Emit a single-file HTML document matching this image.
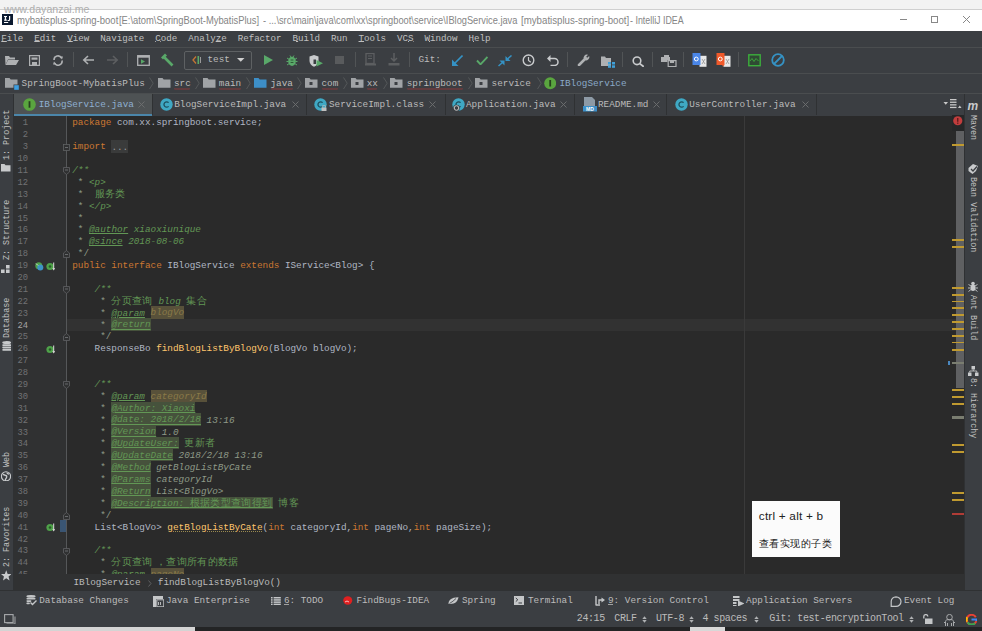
<!DOCTYPE html><html><head><meta charset="utf-8"><style>
*{margin:0;padding:0;box-sizing:border-box}
html,body{width:982px;height:631px;overflow:hidden;background:#3b3e42}
body{position:relative;font-family:"Liberation Mono",monospace;}
.a{position:absolute}
.t{position:absolute;white-space:pre;font-family:"Liberation Mono",monospace;}
.ui{color:#bbbbbb;font-size:9.17px;line-height:12px}
.code{position:absolute;white-space:pre;font-size:9.33px;line-height:11.89px;color:#b0b7c4;left:72.20px}
.k{color:#cc7832}
.m{color:#ffc66d}
.d{color:#629755;font-style:italic}
.st{color:#8f9a88}
.tag{color:#629755;font-style:italic;text-decoration:underline;text-decoration-thickness:1px;text-underline-offset:1px}
.tv{color:#8f9a88;font-style:italic}
.hw{background:#58513a;padding-top:1.2px}
.hg{background:#46523c;padding-top:1.2px}
.cj{font-family:"Liberation Sans",sans-serif;font-style:normal;font-size:10.1px;letter-spacing:0.35px;line-height:0}
.ln{position:absolute;white-space:pre;font-size:8.8px;line-height:11.89px;color:#707274;text-align:right;width:20px;left:8px}
.u{text-decoration:underline dotted #9a8a50;text-underline-offset:1px}
</style></head><body>
<div class="a" style="left:0;top:0;width:982px;height:9px;background:#f2f2f2"></div>
<div class="a" style="left:0;top:9px;width:982px;height:1px;background:#cfcfcf"></div>
<div class="a" style="left:0;top:10px;width:982px;height:21px;background:#ffffff"></div>
<div class="t" style="left:4px;top:3px;font-family:'Liberation Sans',sans-serif;font-size:10.6px;line-height:12px;color:#adadad">www.dayanzai.me</div>
<div class="a" style="left:2px;top:14px;width:11px;height:11px;background:#0c1a30"></div>
<svg class="a" style="left:2px;top:14px" width="11" height="11"><rect x="2" y="2" width="3" height="1" fill="#fff"/><rect x="2.8" y="2" width="1.3" height="4.5" fill="#fff"/><rect x="2" y="5.6" width="3" height="1" fill="#fff"/><path d="M7.6 2v3.6c0 0.6-0.4 0.9-1 0.9H5.6" fill="none" stroke="#fff" stroke-width="1.2"/><rect x="2" y="8" width="4.2" height="1" fill="#fff"/></svg>
<div class="t" style="left:16.5px;top:13.5px;font-family:'Liberation Sans',sans-serif;font-size:11px;line-height:13px;color:#858585;transform-origin:0 0;transform:scaleX(0.8676)">mybatisplus-spring-boot</div>
<div class="t" style="left:119.2px;top:13.5px;font-family:'Liberation Sans',sans-serif;font-size:11px;line-height:13px;color:#858585;transform-origin:0 0;transform:scaleX(0.8512)">[E:\atom\SpringBoot-MybatisPlus]</div>
<div class="t" style="left:263.4px;top:13.5px;font-family:'Liberation Sans',sans-serif;font-size:11px;line-height:13px;color:#858585;transform-origin:0 0;transform:scaleX(0.8424)">- ...\src\main\java\com\xx\springboot\service\IBlogService.java</div>
<div class="t" style="left:520.9px;top:13.5px;font-family:'Liberation Sans',sans-serif;font-size:11px;line-height:13px;color:#858585;transform-origin:0 0;transform:scaleX(0.8809)">[mybatisplus-spring-boot]</div>
<div class="t" style="left:630.4px;top:13.5px;font-family:'Liberation Sans',sans-serif;font-size:11px;line-height:13px;color:#858585;transform-origin:0 0;transform:scaleX(0.8058)">- IntelliJ IDEA</div>
<div class="a" style="left:900px;top:19px;width:7px;height:1px;background:#888"></div>
<div class="a" style="left:931px;top:16px;width:7px;height:7px;border:1px solid #888"></div>
<svg class="a" style="left:962px;top:15px" width="9" height="9"><path d="M1 1L8 8M8 1L1 8" stroke="#888" stroke-width="1"/></svg>
<div class="a" style="left:0;top:31px;width:982px;height:16px;background:#3b3e42"></div>
<div class="t ui" style="left:1.3px;top:32.5px;font-size:9.17px;line-height:12px;color:#c0c0c0"><span style="text-decoration:underline;text-underline-offset:0px">F</span>ile  <span style="text-decoration:underline;text-underline-offset:0px">E</span>dit  <span style="text-decoration:underline;text-underline-offset:0px">V</span>iew  <span style="text-decoration:underline;text-underline-offset:0px">N</span>avigate  <span style="text-decoration:underline;text-underline-offset:0px">C</span>ode  Analy<span style="text-decoration:underline;text-underline-offset:0px">z</span>e  <span style="text-decoration:underline;text-underline-offset:0px">R</span>efactor  <span style="text-decoration:underline;text-underline-offset:0px">B</span>uild  R<span style="text-decoration:underline;text-underline-offset:0px">u</span>n  <span style="text-decoration:underline;text-underline-offset:0px">T</span>ools  VC<span style="text-decoration:underline;text-underline-offset:0px">S</span>  <span style="text-decoration:underline;text-underline-offset:0px">W</span>indow  <span style="text-decoration:underline;text-underline-offset:0px">H</span>elp</div>
<div class="a" style="left:0;top:47px;width:982px;height:1px;background:#4a4d4f"></div>
<div class="a" style="left:0;top:73px;width:982px;height:1px;background:#4a4d4f"></div>
<div class="a" style="left:0;top:93px;width:982px;height:1px;background:#4a4d4f"></div>
<div class="a" style="left:13px;top:94px;width:1px;height:497px;background:#2f3133"></div>
<div class="a" style="left:964px;top:94px;width:1px;height:497px;background:#2f3133"></div>
<div class="a" style="left:14px;top:94px;width:138px;height:21px;background:#4e5254"></div>
<div class="a" style="left:14px;top:113.5px;width:138px;height:2.2px;background:#4b86aa"></div>
<div class="a" style="left:14px;top:116px;width:53px;height:458px;background:#303132"></div>
<div class="a" style="left:67px;top:116px;width:897px;height:458px;background:#2a2a2a"></div>
<div class="a" style="left:66px;top:116px;width:1px;height:458px;background:#555759"></div>
<div class="a" style="left:67px;top:319.03px;width:889px;height:11.59px;background:#323232"></div>
<div class="a" style="left:744px;top:116px;width:1px;height:458px;background:#3a3a3a"></div>
<div class="a" style="left:14px;top:574px;width:951px;height:16.5px;background:#303132"></div>
<div class="a" style="left:14px;top:116px;width:950px;height:458px;overflow:hidden">
<div class="ln" style="top:2.40px;left:-6px">1</div>
<div class="code" style="top:1.40px;left:58.20px"><span class="k">package</span> com.xx.springboot.service;</div>
<div class="ln" style="top:14.29px;left:-6px">2</div>
<div class="code" style="top:13.29px;left:58.20px"></div>
<div class="ln" style="top:26.18px;left:-6px">3</div>
<div class="code" style="top:25.18px;left:58.20px"><span class="k">import</span> <span style="background:#3a3b3b;color:#9a9a9a;padding:1.5px 0 1px">...</span></div>
<div class="ln" style="top:38.07px;left:-6px">10</div>
<div class="code" style="top:37.07px;left:58.20px"></div>
<div class="ln" style="top:49.96px;left:-6px">11</div>
<div class="code" style="top:48.96px;left:58.20px"><span class="d">/**</span></div>
<div class="ln" style="top:61.85px;left:-6px">12</div>
<div class="code" style="top:60.85px;left:58.20px"><span class="st"> * </span><span class="d">&lt;p&gt;</span></div>
<div class="ln" style="top:73.74px;left:-6px">13</div>
<div class="code" style="top:72.74px;left:58.20px"><span class="st"> *  </span><span class="d cj">服务类</span></div>
<div class="ln" style="top:85.63px;left:-6px">14</div>
<div class="code" style="top:84.63px;left:58.20px"><span class="st"> * </span><span class="d">&lt;/p&gt;</span></div>
<div class="ln" style="top:97.52px;left:-6px">15</div>
<div class="code" style="top:96.52px;left:58.20px"><span class="st"> *</span></div>
<div class="ln" style="top:109.41px;left:-6px">16</div>
<div class="code" style="top:108.41px;left:58.20px"><span class="st"> * </span><span class="tag">@author</span><span class="d"> xiaoxiunique</span></div>
<div class="ln" style="top:121.30px;left:-6px">17</div>
<div class="code" style="top:120.30px;left:58.20px"><span class="st"> * </span><span class="tag">@since</span><span class="d"> 2018-08-06</span></div>
<div class="ln" style="top:133.19px;left:-6px">18</div>
<div class="code" style="top:132.19px;left:58.20px"><span class="st"> */</span></div>
<div class="ln" style="top:145.08px;left:-6px">19</div>
<div class="code" style="top:144.08px;left:58.20px"><span class="k">public interface</span> IBlogService <span class="k">extends</span> IService&lt;Blog&gt; {</div>
<div class="ln" style="top:156.97px;left:-6px">20</div>
<div class="code" style="top:155.97px;left:58.20px"></div>
<div class="ln" style="top:168.86px;left:-6px">21</div>
<div class="code" style="top:167.86px;left:58.20px">    <span class="d">/**</span></div>
<div class="ln" style="top:180.75px;left:-6px">22</div>
<div class="code" style="top:179.75px;left:58.20px"><span class="st">     * </span><span class="d cj">分页查询</span><span class="d"> blog </span><span class="d cj">集合</span></div>
<div class="ln" style="top:192.64px;left:-6px">23</div>
<div class="code" style="top:191.64px;left:58.20px"><span class="st">     * </span><span class="tag">@param</span><span class="d"> </span><span class="tv hw" style="color:#8a7a48">blogVo</span></div>
<div class="ln" style="top:204.53px;left:-6px;color:#a4a3a3">24</div>
<div class="code" style="top:203.53px;left:58.20px"><span class="st">     * </span><span class="tag hg">@return</span></div>
<div class="ln" style="top:216.42px;left:-6px">25</div>
<div class="code" style="top:215.42px;left:58.20px"><span class="st">     */</span></div>
<div class="ln" style="top:228.31px;left:-6px">26</div>
<div class="code" style="top:227.31px;left:58.20px">    ResponseBo <span class="m">findBlogListByBlogVo</span>(BlogVo blogVo);</div>
<div class="ln" style="top:240.20px;left:-6px">27</div>
<div class="code" style="top:239.20px;left:58.20px"></div>
<div class="ln" style="top:252.09px;left:-6px">28</div>
<div class="code" style="top:251.09px;left:58.20px"></div>
<div class="ln" style="top:263.98px;left:-6px">29</div>
<div class="code" style="top:262.98px;left:58.20px">    <span class="d">/**</span></div>
<div class="ln" style="top:275.87px;left:-6px">30</div>
<div class="code" style="top:274.87px;left:58.20px"><span class="st">     * </span><span class="tag">@param</span><span class="d"> </span><span class="tv hw" style="color:#8a7a48">categoryId</span></div>
<div class="ln" style="top:287.76px;left:-6px">31</div>
<div class="code" style="top:286.76px;left:58.20px"><span class="st">     * </span><span class="tag hg">@Author: Xiaoxi</span></div>
<div class="ln" style="top:299.65px;left:-6px">32</div>
<div class="code" style="top:298.65px;left:58.20px"><span class="st">     * </span><span class="tag hg">@date: 2018/2/18</span><span class="tv"> 13:16</span></div>
<div class="ln" style="top:311.54px;left:-6px">33</div>
<div class="code" style="top:310.54px;left:58.20px"><span class="st">     * </span><span class="tag hg">@Version</span><span class="tv"> 1.0</span></div>
<div class="ln" style="top:323.43px;left:-6px">34</div>
<div class="code" style="top:322.43px;left:58.20px"><span class="st">     * </span><span class="tag hg">@UpdateUser:</span><span class="d"> </span><span class="d cj">更新者</span></div>
<div class="ln" style="top:335.32px;left:-6px">35</div>
<div class="code" style="top:334.32px;left:58.20px"><span class="st">     * </span><span class="tag hg">@UpdateDate</span><span class="tv"> 2018/2/18 13:16</span></div>
<div class="ln" style="top:347.21px;left:-6px">36</div>
<div class="code" style="top:346.21px;left:58.20px"><span class="st">     * </span><span class="tag hg">@Method</span><span class="tv"> getBlogListByCate</span></div>
<div class="ln" style="top:359.10px;left:-6px">37</div>
<div class="code" style="top:358.10px;left:58.20px"><span class="st">     * </span><span class="tag hg">@Params</span><span class="tv"> categoryId</span></div>
<div class="ln" style="top:370.99px;left:-6px">38</div>
<div class="code" style="top:369.99px;left:58.20px"><span class="st">     * </span><span class="tag hg">@Return</span><span class="tv"> List&lt;BlogVo&gt;</span></div>
<div class="ln" style="top:382.88px;left:-6px">39</div>
<div class="code" style="top:381.88px;left:58.20px"><span class="st">     * </span><span class="tag hg">@Description: <span class="cj">根据类型查询得到</span></span><span class="d"> </span><span class="d cj">博客</span></div>
<div class="ln" style="top:394.77px;left:-6px">40</div>
<div class="code" style="top:393.77px;left:58.20px"><span class="st">     */</span></div>
<div class="ln" style="top:406.66px;left:-6px">41</div>
<div class="code" style="top:405.66px;left:58.20px">    List&lt;BlogVo&gt; <span class="m u">getBlogListByCate</span>(<span class="k">int</span> categoryId,<span class="k">int</span> pageNo,<span class="k">int</span> pageSize);</div>
<div class="ln" style="top:418.55px;left:-6px">42</div>
<div class="code" style="top:417.55px;left:58.20px"></div>
<div class="ln" style="top:430.44px;left:-6px">43</div>
<div class="code" style="top:429.44px;left:58.20px">    <span class="d">/**</span></div>
<div class="ln" style="top:442.33px;left:-6px">44</div>
<div class="code" style="top:441.33px;left:58.20px"><span class="st">     * </span><span class="d cj">分页查询 ，查询所有的数据</span></div>
<div class="ln" style="top:454.22px;left:-6px">45</div>
<div class="code" style="top:453.22px;left:58.20px"><span class="st">     * </span><span class="tag">@param</span><span class="d"> </span><span class="tv hw" style="color:#8a7a48">pageNo</span></div>
</div>
<div class="t" style="left:73.4px;top:577px;font-size:9.33px;line-height:12px;color:#bbbbbb">IBlogService</div>
<div class="t" style="left:157.8px;top:577px;font-size:9.33px;line-height:12px;color:#bbbbbb">findBlogListByBlogVo()</div>
<svg class="a" style="left:147.5px;top:580px" width="4" height="7"><path d="M0.5 0.5L3 3.5 0.5 6.5" fill="none" stroke="#6a6c6e" stroke-width="0.8"/></svg>
<div class="a" style="left:0;top:590px;width:982px;height:1px;background:#2f3133"></div>
<div class="t" style="left:39.2px;top:595px;font-size:9.33px;line-height:12px;color:#bbbbbb">Database Changes</div>
<div class="t" style="left:165.9px;top:595px;font-size:9.33px;line-height:12px;color:#bbbbbb">Java Enterprise</div>
<div class="t" style="left:283.9px;top:595px;font-size:9.33px;line-height:12px;color:#bbbbbb">6: TODO</div>
<div class="t" style="left:356.4px;top:595px;font-size:9.33px;line-height:12px;color:#bbbbbb">FindBugs-IDEA</div>
<div class="t" style="left:462.0px;top:595px;font-size:9.33px;line-height:12px;color:#bbbbbb">Spring</div>
<div class="t" style="left:528.0px;top:595px;font-size:9.33px;line-height:12px;color:#bbbbbb">Terminal</div>
<div class="t" style="left:608.0px;top:595px;font-size:9.33px;line-height:12px;color:#bbbbbb">9: Version Control</div>
<div class="t" style="left:746.1px;top:595px;font-size:9.33px;line-height:12px;color:#bbbbbb">Application Servers</div>
<div class="t" style="left:904.0px;top:595px;font-size:9.33px;line-height:12px;color:#bbbbbb">Event Log</div>
<div class="t" style="left:576.8px;top:613px;font-size:10px;letter-spacing:-0.4px;line-height:12px;color:#bbbbbb">24:15</div>
<div class="t" style="left:614.3px;top:613px;font-size:10px;letter-spacing:-0.4px;line-height:12px;color:#bbbbbb">CRLF</div>
<div class="t" style="left:656.0px;top:613px;font-size:10px;letter-spacing:-0.4px;line-height:12px;color:#bbbbbb">UTF-8</div>
<div class="t" style="left:702.4px;top:613px;font-size:10px;letter-spacing:-0.4px;line-height:12px;color:#bbbbbb">4 spaces</div>
<div class="t" style="left:769.3px;top:613px;font-size:10px;letter-spacing:-0.4px;line-height:12px;color:#bbbbbb">Git: test-encryptionTool</div>
<div class="a" style="left:0;top:627px;width:982px;height:4px;background:#232425"></div>
<div class="a" style="left:0;top:627px;width:195px;height:4px;background:#d4d4d4"></div>
<div class="a" style="left:690px;top:627px;width:35px;height:4px;background:#d8d8d8"></div>
<div class="a" style="left:752px;top:501px;width:88px;height:56px;background:#fbfbfb"></div>
<div class="t" style="left:758.8px;top:509.5px;font-family:'Liberation Sans',sans-serif;font-size:11.8px;letter-spacing:0.2px;line-height:13px;color:#222">ctrl + alt + b</div>
<div class="t" style="left:758.5px;top:536.5px;font-family:'Liberation Sans',sans-serif;font-size:10.4px;letter-spacing:0.55px;line-height:13px;color:#222">查看实现的子类</div>
<svg class="a" style="left:4px;top:55px" width="16" height="11" viewBox="0 0 16 11"><path d="M1 1h4l1 1.5h5v2H4L1.5 10z" fill="#afb1b3"/><path d="M4 5h11l-3 5H1.5z" fill="#afb1b3"/></svg>
<svg class="a" style="left:29px;top:55px" width="11" height="11" viewBox="0 0 11 11"><path d="M0.5 0.5h10v10h-10z" fill="none" stroke="#afb1b3" stroke-width="1.4"/><rect x="2.5" y="2.5" width="6" height="2.2" fill="#afb1b3"/><rect x="3" y="7" width="5" height="3" fill="#afb1b3"/></svg>
<svg class="a" style="left:52px;top:55px" width="12" height="11" viewBox="0 0 12 11"><path d="M2 5A4 4 0 0 1 9.5 3" fill="none" stroke="#afb1b3" stroke-width="1.6"/><path d="M10 5.5A4 4 0 0 1 2.5 8" fill="none" stroke="#afb1b3" stroke-width="1.6"/><path d="M7.5 1.5l3.5 0 -1 3z" fill="#afb1b3"/><path d="M4.5 9.5l-3.5 0 1-3z" fill="#afb1b3"/></svg>
<div class="a" style="left:73.3px;top:52px;width:1px;height:15px;background:#515456"></div>
<div class="a" style="left:127.4px;top:52px;width:1px;height:15px;background:#515456"></div>
<div class="a" style="left:354.6px;top:52px;width:1px;height:15px;background:#515456"></div>
<div class="a" style="left:408.6px;top:52px;width:1px;height:15px;background:#515456"></div>
<div class="a" style="left:567.4px;top:52px;width:1px;height:15px;background:#515456"></div>
<div class="a" style="left:621.8px;top:52px;width:1px;height:15px;background:#515456"></div>
<div class="a" style="left:652.4px;top:52px;width:1px;height:15px;background:#515456"></div>
<div class="a" style="left:683.3px;top:52px;width:1px;height:15px;background:#515456"></div>
<div class="a" style="left:737.6px;top:52px;width:1px;height:15px;background:#515456"></div>
<svg class="a" style="left:82px;top:55px" width="13" height="10" viewBox="0 0 13 10"><path d="M12 5H2M6 1L1.8 5 6 9" fill="none" stroke="#afb1b3" stroke-width="1.6"/></svg>
<svg class="a" style="left:106px;top:55px" width="13" height="10" viewBox="0 0 13 10"><path d="M1 5h10M7 1l4.2 4L7 9" fill="none" stroke="#5d5f61" stroke-width="1.6"/></svg>
<svg class="a" style="left:137px;top:55px" width="13" height="11" viewBox="0 0 13 11"><rect x="0.7" y="0.7" width="11.6" height="9.6" fill="none" stroke="#afb1b3" stroke-width="1.3"/><rect x="0.7" y="0.7" width="11.6" height="2" fill="#afb1b3"/><path d="M4 4.2l4 2.3-4 2.3z" fill="#59a869"/></svg>
<svg class="a" style="left:160px;top:53px" width="14" height="14" viewBox="0 0 14 14"><path d="M1 4.5L5 0.5 7 2.5 3 6.5z" fill="#59a869"/><path d="M4.5 4.5L12.5 12.5" stroke="#59a869" stroke-width="2.6"/></svg>
<div class="a" style="left:184px;top:50.5px;width:68px;height:19.5px;border:1px solid #5e6163;border-radius:2px"></div>
<svg class="a" style="left:192px;top:56px" width="10" height="8" viewBox="0 0 10 8"><path d="M4 0.5L1 4 4 7.5" fill="none" stroke="#c57633" stroke-width="1.3"/><rect x="5.5" y="0" width="1.6" height="8" fill="#59a869"/><rect x="8" y="1" width="1" height="6" fill="#999"/></svg>
<div class="t" style="left:207.5px;top:54px;font-size:9.33px;line-height:12px;color:#bbbbbb">test</div>
<svg class="a" style="left:236.5px;top:58px" width="8" height="4" viewBox="0 0 8 4"><path d="M0 0h7.5L3.75 3.8z" fill="#d0d0d0"/></svg>
<svg class="a" style="left:264px;top:55px" width="9" height="10" viewBox="0 0 9 10"><path d="M0 0L9 5 0 10z" fill="#59a869"/></svg>
<svg class="a" style="left:285.5px;top:53.5px" width="12" height="13" viewBox="0 0 12 13"><ellipse cx="6" cy="7.3" rx="3.8" ry="4.6" fill="#59a869"/><path d="M1 4l2 1.3M11 4L9 5.3M0.5 7.5h2M11.5 7.5h-2M1 11l2-1.3M11 11L9 9.7M4 1.5l1 1.5M8 1.5L7 3" stroke="#59a869" stroke-width="1"/><rect x="4.6" y="5.5" width="2.8" height="1" fill="#2f5a36"/><rect x="4.6" y="8" width="2.8" height="1" fill="#2f5a36"/></svg>
<svg class="a" style="left:309px;top:55px" width="15" height="12" viewBox="0 0 15 12"><path d="M0.5 1.5L5 0 9.5 1.5V6C9.5 9 7 11 5 11.8 3 11 0.5 9 0.5 6z" fill="#c8cacc"/><path d="M7 4.5l-2.5 0V9H7z" fill="#3b3e42"/><path d="M7.5 5L14 8.3 7.5 11.6z" fill="#59a869"/></svg>
<svg class="a" style="left:335px;top:56.4px" width="9" height="8" viewBox="0 0 9 8"><rect width="9" height="8" fill="#595b5d"/></svg>
<svg class="a" style="left:365px;top:53px" width="11" height="13" viewBox="0 0 11 13"><rect x="1" y="0.5" width="8" height="10" fill="none" stroke="#5d5f61" stroke-width="1.3"/><path d="M3 3h4M3 5.5h4" stroke="#5d5f61"/><rect x="0" y="10.5" width="11" height="2" fill="#5d5f61"/></svg>
<svg class="a" style="left:388px;top:53px" width="12" height="13" viewBox="0 0 12 13"><path d="M6 0v7M3 5l3 3 3-3" fill="none" stroke="#5d5f61" stroke-width="1.5"/><rect x="0.5" y="10" width="11" height="2.5" fill="#5d5f61"/></svg>
<div class="t" style="left:418.5px;top:53.5px;font-size:9.33px;line-height:12px;color:#bbbbbb">Git:</div>
<svg class="a" style="left:451.5px;top:55px" width="11" height="11" viewBox="0 0 11 11"><path d="M10.5 0.5L2 9" stroke="#3592c4" stroke-width="1.6"/><path d="M0 11V4.5l6.5 6.5z" fill="#3592c4"/></svg>
<svg class="a" style="left:475.5px;top:55.5px" width="12.5" height="9.5" viewBox="0 0 12.5 9.5"><path d="M1 4.5l3.5 3.8L11.5 1" fill="none" stroke="#59a869" stroke-width="1.9"/></svg>
<svg class="a" style="left:497.5px;top:55px" width="14" height="11.5" viewBox="0 0 14 11.5"><path d="M13.5 0.5L9 4.5" stroke="#3592c4" stroke-width="1.5"/><path d="M7.5 6H12.5L7.5 1z" fill="#3592c4"/><path d="M0.5 11L5 7" stroke="#3592c4" stroke-width="1.5"/><path d="M6.5 5.5H1.5L6.5 10.5z" fill="#3592c4"/></svg>
<svg class="a" style="left:522px;top:54.3px" width="13" height="12.5" viewBox="0 0 13 12.5"><circle cx="6.5" cy="6.25" r="5.3" fill="none" stroke="#c9cbcd" stroke-width="1.4"/><path d="M6.5 3v3.5l2.3 1.8" fill="none" stroke="#c9cbcd" stroke-width="1.2"/></svg>
<svg class="a" style="left:547px;top:55px" width="12" height="11" viewBox="0 0 12 11"><path d="M2.5 3.5H7.5A3.5 3.5 0 0 1 7.5 10.5H3.5" fill="none" stroke="#c9cbcd" stroke-width="1.5"/><path d="M0 3.5L3.5 0V7z" fill="#c9cbcd"/></svg>
<svg class="a" style="left:576.5px;top:54.3px" width="13" height="12" viewBox="0 0 13 12"><path d="M2 11L7.5 5.5" stroke="#afb1b3" stroke-width="2.6" stroke-linecap="round"/><path d="M7 5.5A3.3 3.3 0 0 1 11 0.8L9.2 2.8 10.2 3.8 12.2 2A3.3 3.3 0 0 1 7.5 6z" fill="#afb1b3"/></svg>
<svg class="a" style="left:600.5px;top:55.5px" width="15" height="12" viewBox="0 0 15 12"><path d="M0 0.5h4l1 1.5h5v8H0z" fill="#afb1b3"/><rect x="7" y="6" width="3" height="2.5" fill="#40a0d8"/><rect x="11" y="6" width="3" height="2.5" fill="#40a0d8"/><rect x="7" y="9.3" width="3" height="2.5" fill="#40a0d8"/><rect x="11" y="9.3" width="3" height="2.5" fill="#40a0d8"/></svg>
<svg class="a" style="left:631.5px;top:55.5px" width="12.5" height="11" viewBox="0 0 12.5 11"><circle cx="5" cy="4.8" r="3.8" fill="none" stroke="#c9cbcd" stroke-width="1.6"/><path d="M7.8 7.6L11.8 10.8" stroke="#c9cbcd" stroke-width="1.8"/></svg>
<svg class="a" style="left:661px;top:55px" width="15.5" height="12" viewBox="0 0 15.5 12"><path d="M0 2h3V0h5v2h1v5H0z" fill="#afb1b3"/><rect x="6.5" y="5" width="9" height="7" fill="#3b3e42"/><path d="M7.2 5.6h7.8v6H7.2z" fill="none" stroke="#afb1b3" stroke-width="1.2"/><rect x="9" y="6" width="4" height="2" fill="#afb1b3"/></svg>
<svg class="a" style="left:691.5px;top:53px" width="15" height="14" viewBox="0 0 15 14"><rect x="7.5" y="2.8" width="7" height="11" fill="#e8e8e8"/><path d="M10 6l3 5M13 6l-3 5" stroke="#888" stroke-width="0.7"/><rect x="0.5" y="0" width="8" height="12" fill="#4a86e8"/><circle cx="4.3" cy="6" r="1.9" fill="none" stroke="#fff" stroke-width="1"/></svg>
<svg class="a" style="left:715.5px;top:53px" width="15" height="14" viewBox="0 0 15 14"><rect x="7.5" y="2.8" width="7" height="11" fill="#e8e8e8"/><path d="M10 6l3 5M13 6l-3 5" stroke="#888" stroke-width="0.7"/><path d="M0.5 0h8v12l-2 1.5V12h-6z" fill="#f0592a"/><circle cx="4.3" cy="6" r="1.9" fill="none" stroke="#fff" stroke-width="1"/></svg>
<svg class="a" style="left:747.5px;top:54px" width="13" height="12.5" viewBox="0 0 13 12.5"><rect x="0.8" y="0.8" width="11.4" height="10.9" fill="#2f4a33" stroke="#3cae3c" stroke-width="1.4"/><path d="M2 7l2-2.5 2 3 2-3 2.5 2.5" fill="none" stroke="#3cae3c" stroke-width="0.9"/></svg>
<svg class="a" style="left:770.5px;top:53px" width="14" height="14" viewBox="0 0 14 14"><circle cx="7" cy="7" r="5.8" fill="none" stroke="#3592c4" stroke-width="1.8"/><path d="M3 11L11 3" stroke="#3592c4" stroke-width="1.8"/></svg>
<svg class="a" style="left:5px;top:78px" width="14" height="13" viewBox="0 0 14 13"><path d="M0 0h4.5l1.2 1.5H12.5V9.7H0z" fill="#a0a3a6"/><rect x="8.5" y="6.5" width="5.5" height="5.5" fill="#3b3e42"/><rect x="9.2" y="7.2" width="4.6" height="4.6" fill="#3d9ee0"/></svg>
<div class="t" style="left:21.6px;top:78px;font-size:9.33px;line-height:12px;color:#bbbbbb">SpringBoot-MybatisPlus</div>
<svg class="a" style="left:149px;top:77px" width="5" height="12.5" viewBox="0 0 5 12.5"><path d="M0.5 0.5L4.2 6.2 0.5 12" fill="none" stroke="#55585a" stroke-width="1"/></svg>
<svg class="a" style="left:157.5px;top:78px" width="13" height="10" viewBox="0 0 13 10"><path d="M0 0h4.5l1.2 1.5H12.5V9.7H0z" fill="#a0a3a6"/></svg>
<div class="t" style="left:174.0px;top:78px;font-size:9.33px;line-height:12px;color:#bbbbbb">src</div>
<svg class="a" style="left:174px;top:88.3px" width="16" height="2" viewBox="0 0 16 2"><path d="M0 1.5 l1 -1 l1 1 l1 -1 l1 1 l1 -1 l1 1 l1 -1 l1 1 l1 -1 l1 1 l1 -1 l1 1 l1 -1 l1 1 l1 -1 l1 1" fill="none" stroke="#a03c3c" stroke-width="0.9"/></svg>
<svg class="a" style="left:195px;top:77px" width="5" height="12.5" viewBox="0 0 5 12.5"><path d="M0.5 0.5L4.2 6.2 0.5 12" fill="none" stroke="#55585a" stroke-width="1"/></svg>
<svg class="a" style="left:203px;top:78px" width="13" height="10" viewBox="0 0 13 10"><path d="M0 0h4.5l1.2 1.5H12.5V9.7H0z" fill="#a0a3a6"/></svg>
<div class="t" style="left:218.8px;top:78px;font-size:9.33px;line-height:12px;color:#bbbbbb">main</div>
<svg class="a" style="left:219px;top:88.3px" width="22" height="2" viewBox="0 0 22 2"><path d="M0 1.5 l1 -1 l1 1 l1 -1 l1 1 l1 -1 l1 1 l1 -1 l1 1 l1 -1 l1 1 l1 -1 l1 1 l1 -1 l1 1 l1 -1 l1 1 l1 -1 l1 1 l1 -1 l1 1 l1 -1 l1 1" fill="none" stroke="#a03c3c" stroke-width="0.9"/></svg>
<svg class="a" style="left:246px;top:77px" width="5" height="12.5" viewBox="0 0 5 12.5"><path d="M0.5 0.5L4.2 6.2 0.5 12" fill="none" stroke="#55585a" stroke-width="1"/></svg>
<svg class="a" style="left:254px;top:78px" width="13" height="10" viewBox="0 0 13 10"><path d="M0 0h4.5l1.2 1.5H12.5V9.7H0z" fill="#3d8fc8"/></svg>
<div class="t" style="left:270.5px;top:78px;font-size:9.33px;line-height:12px;color:#bbbbbb">java</div>
<svg class="a" style="left:271px;top:88.3px" width="22" height="2" viewBox="0 0 22 2"><path d="M0 1.5 l1 -1 l1 1 l1 -1 l1 1 l1 -1 l1 1 l1 -1 l1 1 l1 -1 l1 1 l1 -1 l1 1 l1 -1 l1 1 l1 -1 l1 1 l1 -1 l1 1 l1 -1 l1 1 l1 -1 l1 1" fill="none" stroke="#a03c3c" stroke-width="0.9"/></svg>
<svg class="a" style="left:297px;top:77px" width="5" height="12.5" viewBox="0 0 5 12.5"><path d="M0.5 0.5L4.2 6.2 0.5 12" fill="none" stroke="#55585a" stroke-width="1"/></svg>
<svg class="a" style="left:305px;top:78px" width="13" height="10" viewBox="0 0 13 10"><path d="M0 0h4.5l1.2 1.5H12.5V9.7H0z" fill="#a0a3a6"/><rect x="4.5" y="4" width="3" height="3" fill="#3b3e42"/></svg>
<div class="t" style="left:321.5px;top:78px;font-size:9.33px;line-height:12px;color:#bbbbbb">com</div>
<svg class="a" style="left:322px;top:88.3px" width="16" height="2" viewBox="0 0 16 2"><path d="M0 1.5 l1 -1 l1 1 l1 -1 l1 1 l1 -1 l1 1 l1 -1 l1 1 l1 -1 l1 1 l1 -1 l1 1 l1 -1 l1 1 l1 -1 l1 1" fill="none" stroke="#a03c3c" stroke-width="0.9"/></svg>
<svg class="a" style="left:343px;top:77px" width="5" height="12.5" viewBox="0 0 5 12.5"><path d="M0.5 0.5L4.2 6.2 0.5 12" fill="none" stroke="#55585a" stroke-width="1"/></svg>
<svg class="a" style="left:350.5px;top:78px" width="13" height="10" viewBox="0 0 13 10"><path d="M0 0h4.5l1.2 1.5H12.5V9.7H0z" fill="#a0a3a6"/><rect x="4.5" y="4" width="3" height="3" fill="#3b3e42"/></svg>
<div class="t" style="left:366.7px;top:78px;font-size:9.33px;line-height:12px;color:#bbbbbb">xx</div>
<svg class="a" style="left:367px;top:88.3px" width="10" height="2" viewBox="0 0 10 2"><path d="M0 1.5 l1 -1 l1 1 l1 -1 l1 1 l1 -1 l1 1 l1 -1 l1 1 l1 -1 l1 1" fill="none" stroke="#a03c3c" stroke-width="0.9"/></svg>
<svg class="a" style="left:383px;top:77px" width="5" height="12.5" viewBox="0 0 5 12.5"><path d="M0.5 0.5L4.2 6.2 0.5 12" fill="none" stroke="#55585a" stroke-width="1"/></svg>
<svg class="a" style="left:390px;top:78px" width="13" height="10" viewBox="0 0 13 10"><path d="M0 0h4.5l1.2 1.5H12.5V9.7H0z" fill="#a0a3a6"/><rect x="4.5" y="4" width="3" height="3" fill="#3b3e42"/></svg>
<div class="t" style="left:406.7px;top:78px;font-size:9.33px;line-height:12px;color:#bbbbbb">springboot</div>
<svg class="a" style="left:407px;top:88.3px" width="56" height="2" viewBox="0 0 56 2"><path d="M0 1.5 l1 -1 l1 1 l1 -1 l1 1 l1 -1 l1 1 l1 -1 l1 1 l1 -1 l1 1 l1 -1 l1 1 l1 -1 l1 1 l1 -1 l1 1 l1 -1 l1 1 l1 -1 l1 1 l1 -1 l1 1 l1 -1 l1 1 l1 -1 l1 1 l1 -1 l1 1 l1 -1 l1 1 l1 -1 l1 1 l1 -1 l1 1 l1 -1 l1 1 l1 -1 l1 1 l1 -1 l1 1 l1 -1 l1 1 l1 -1 l1 1 l1 -1 l1 1 l1 -1 l1 1 l1 -1 l1 1 l1 -1 l1 1 l1 -1 l1 1 l1 -1 l1 1" fill="none" stroke="#a03c3c" stroke-width="0.9"/></svg>
<svg class="a" style="left:468px;top:77px" width="5" height="12.5" viewBox="0 0 5 12.5"><path d="M0.5 0.5L4.2 6.2 0.5 12" fill="none" stroke="#55585a" stroke-width="1"/></svg>
<svg class="a" style="left:475.3px;top:78px" width="13" height="10" viewBox="0 0 13 10"><path d="M0 0h4.5l1.2 1.5H12.5V9.7H0z" fill="#a0a3a6"/><rect x="4.5" y="4" width="3" height="3" fill="#3b3e42"/></svg>
<div class="t" style="left:491.6px;top:78px;font-size:9.33px;line-height:12px;color:#bbbbbb">service</div>
<svg class="a" style="left:536.5px;top:77px" width="5" height="12.5" viewBox="0 0 5 12.5"><path d="M0.5 0.5L4.2 6.2 0.5 12" fill="none" stroke="#55585a" stroke-width="1"/></svg>
<svg class="a" style="left:543.5px;top:77px" width="12.5" height="12.5" viewBox="0 0 12.5 12.5"><circle cx="6.2" cy="6.2" r="6" fill="#5aa53f"/><rect x="5.3" y="3" width="1.8" height="6.5" fill="#26401e"/></svg>
<div class="t" style="left:559.4px;top:78px;font-size:9.33px;line-height:12px;color:#8aa9c8">IBlogService</div>
<svg class="a" style="left:22.8px;top:97.8px" width="13" height="13" viewBox="0 0 13 13"><circle cx="6.5" cy="6.5" r="6.3" fill="#5aa53f"/><rect x="5.6" y="3.2" width="1.8" height="6.5" fill="#26401e"/></svg>
<div class="t" style="left:38.7px;top:98.5px;font-size:9.33px;line-height:12px;color:#8eafd0">IBlogService.java</div>
<svg class="a" style="left:138.0px;top:100.5px" width="7" height="7" viewBox="0 0 7 7"><path d="M0.5 0.5l6 6M6.5 0.5l-6 6" stroke="#6e7072" stroke-width="0.9"/></svg>
<div class="a" style="left:151.5px;top:94px;width:1px;height:21px;background:#2f3133"></div>
<svg class="a" style="left:160px;top:97.8px" width="13" height="13" viewBox="0 0 13 13"><circle cx="6.5" cy="6.5" r="6.2" fill="#3fa8c4"/><path d="M8.6 4.6A2.7 2.7 0 1 0 8.6 8.4" fill="none" stroke="#1d4f5e" stroke-width="1.3"/></svg>
<div class="t" style="left:174.2px;top:98.5px;font-size:9.33px;line-height:12px;color:#bbbbbb">BlogServiceImpl.java</div>
<svg class="a" style="left:292.2px;top:100.5px" width="7" height="7" viewBox="0 0 7 7"><path d="M0.5 0.5l6 6M6.5 0.5l-6 6" stroke="#6e7072" stroke-width="0.9"/></svg>
<div class="a" style="left:306.0px;top:94px;width:1px;height:21px;background:#2f3133"></div>
<svg class="a" style="left:313.5px;top:97.8px" width="13" height="13" viewBox="0 0 13 13"><circle cx="6.5" cy="6.5" r="6.2" fill="#3fa8c4"/><path d="M8.6 4.6A2.7 2.7 0 1 0 8.6 8.4" fill="none" stroke="#1d4f5e" stroke-width="1.3"/></svg>
<svg class="a" style="left:321px;top:105px" width="6" height="6" viewBox="0 0 6 6"><rect x="0.5" y="2.5" width="5" height="3.5" fill="#c0c0c0"/><path d="M1.5 2.5V1.5a1.5 1.5 0 0 1 3 0v1" fill="none" stroke="#c0c0c0" stroke-width="0.8"/></svg>
<div class="t" style="left:329.0px;top:98.5px;font-size:9.33px;line-height:12px;color:#bbbbbb">ServiceImpl.class</div>
<svg class="a" style="left:429.0px;top:100.5px" width="7" height="7" viewBox="0 0 7 7"><path d="M0.5 0.5l6 6M6.5 0.5l-6 6" stroke="#6e7072" stroke-width="0.9"/></svg>
<div class="a" style="left:444.8px;top:94px;width:1px;height:21px;background:#2f3133"></div>
<svg class="a" style="left:451.5px;top:97.8px" width="14" height="14" viewBox="0 0 14 14"><circle cx="6.5" cy="6.5" r="6.2" fill="#3fa8c4"/><path d="M8.6 4.6A2.7 2.7 0 1 0 8.6 8.4" fill="none" stroke="#1d4f5e" stroke-width="1.3"/><circle cx="4.5" cy="10" r="3.3" fill="#3b3e42"/><circle cx="4.5" cy="10" r="2.3" fill="none" stroke="#c8c8c8" stroke-width="1"/></svg>
<div class="t" style="left:466.0px;top:98.5px;font-size:9.33px;line-height:12px;color:#bbbbbb">Application.java</div>
<svg class="a" style="left:560.3px;top:100.5px" width="7" height="7" viewBox="0 0 7 7"><path d="M0.5 0.5l6 6M6.5 0.5l-6 6" stroke="#6e7072" stroke-width="0.9"/></svg>
<div class="a" style="left:573.5px;top:94px;width:1px;height:21px;background:#2f3133"></div>
<svg class="a" style="left:582.5px;top:97px" width="14" height="15" viewBox="0 0 14 15"><path d="M1 0h8l3 3v6H1z" fill="#8d9aa6"/><rect x="0" y="9" width="14" height="5.5" fill="#3d8fc8"/><text x="7" y="13.6" font-size="5" font-family="Liberation Sans" fill="#fff" text-anchor="middle" font-weight="bold">MD</text></svg>
<div class="t" style="left:598.0px;top:98.5px;font-size:9.33px;line-height:12px;color:#bbbbbb">README.md</div>
<svg class="a" style="left:653.1px;top:100.5px" width="7" height="7" viewBox="0 0 7 7"><path d="M0.5 0.5l6 6M6.5 0.5l-6 6" stroke="#6e7072" stroke-width="0.9"/></svg>
<div class="a" style="left:666.4px;top:94px;width:1px;height:21px;background:#2f3133"></div>
<svg class="a" style="left:674.5px;top:97.8px" width="13" height="13" viewBox="0 0 13 13"><circle cx="6.5" cy="6.5" r="6.2" fill="#3fa8c4"/><path d="M8.6 4.6A2.7 2.7 0 1 0 8.6 8.4" fill="none" stroke="#1d4f5e" stroke-width="1.3"/></svg>
<div class="t" style="left:689.2px;top:98.5px;font-size:9.33px;line-height:12px;color:#bbbbbb">UserController.java</div>
<svg class="a" style="left:801.5px;top:100.5px" width="7" height="7" viewBox="0 0 7 7"><path d="M0.5 0.5l6 6M6.5 0.5l-6 6" stroke="#6e7072" stroke-width="0.9"/></svg>
<div class="a" style="left:815.7px;top:94px;width:1px;height:21px;background:#2f3133"></div>
<svg class="a" style="left:943px;top:97px" width="19" height="12" viewBox="0 0 19 12"><path d="M0.5 5h4.5L2.75 7.8z" fill="#c8c8c8"/><rect x="7" y="2" width="6.5" height="1.3" fill="#c8c8c8"/><rect x="7" y="4.6" width="6.5" height="1.3" fill="#c8c8c8"/><rect x="7" y="7.2" width="6.5" height="1.3" fill="#c8c8c8"/><rect x="7" y="9.8" width="6.5" height="1.3" fill="#c8c8c8"/><path d="M15 11h3.5l-1.75-2.5z" fill="#c8c8c8"/></svg>
<div class="t" style="left:2.6px;top:159.5px;font-size:8.4px;line-height:9px;color:#c0c0c0;transform:rotate(-90deg);transform-origin:0 0">1: Project</div>
<svg class="a" style="left:1.2px;top:164.4px" width="10" height="7.5" viewBox="0 0 10 7.5"><path d="M0 0h3.5l1 1.2H9.5V7.5H0z" fill="#c8cacc"/></svg>
<div class="t" style="left:2.6px;top:260.3px;font-size:8.4px;line-height:9px;color:#c0c0c0;transform:rotate(-90deg);transform-origin:0 0">Z: Structure</div>
<svg class="a" style="left:1.4px;top:265px" width="9" height="8" viewBox="0 0 9 8"><rect x="0" y="4.5" width="3.6" height="3.5" fill="#c8cacc"/><rect x="5" y="4.5" width="3.6" height="3.5" fill="#c8cacc"/><rect x="5" y="0" width="3.6" height="3.5" fill="#c8cacc"/></svg>
<div class="t" style="left:2.6px;top:338.2px;font-size:8.4px;line-height:9px;color:#c0c0c0;transform:rotate(-90deg);transform-origin:0 0">Database</div>
<svg class="a" style="left:1.5px;top:341.3px" width="9.5" height="10" viewBox="0 0 9.5 10"><ellipse cx="4.75" cy="1.6" rx="4.5" ry="1.5" fill="#c8cacc"/><rect x="0.25" y="3.3" width="9" height="1.8" rx="0.8" fill="#c8cacc"/><rect x="0.25" y="5.6" width="9" height="1.8" rx="0.8" fill="#c8cacc"/><rect x="0.25" y="7.9" width="9" height="1.9" rx="0.8" fill="#c8cacc"/></svg>
<div class="t" style="left:2.6px;top:467.3px;font-size:8.4px;line-height:9px;color:#c0c0c0;transform:rotate(-90deg);transform-origin:0 0">Web</div>
<svg class="a" style="left:1.1px;top:470.7px" width="10" height="10.7" viewBox="0 0 10 10.7"><circle cx="5" cy="5.35" r="4.6" fill="none" stroke="#c8cacc" stroke-width="1.2"/><path d="M2 3.5c1.5 0 2 1 3 1s1 2 0 3-1 2 0 2.5M6 1.5c0 1 1 1.5 2 1.5" fill="none" stroke="#c8cacc" stroke-width="1.3"/></svg>
<div class="t" style="left:2.6px;top:567.3px;font-size:8.4px;line-height:9px;color:#c0c0c0;transform:rotate(-90deg);transform-origin:0 0">2: Favorites</div>
<svg class="a" style="left:0.7px;top:570px" width="10.5" height="10.6" viewBox="0 0 10.5 10.6"><path d="M5.25 0.3l1.4 3.6 3.8 0.2-2.9 2.5 1 3.8-3.3-2.1-3.3 2.1 1-3.8L0 4.1l3.8-0.2z" fill="#c8cacc"/></svg>
<div class="t" style="left:967.5px;top:99.5px;font-size:12px;line-height:12px;color:#c8cacc;font-weight:bold;font-style:italic;font-family:'Liberation Sans',sans-serif">m</div>
<div class="t" style="left:977.2px;top:114.5px;font-size:8.4px;line-height:9px;color:#c0c0c0;transform:rotate(90deg);transform-origin:0 0">Maven</div>
<svg class="a" style="left:968.4px;top:164.2px" width="10.7" height="10" viewBox="0 0 10.7 10"><path d="M0.5 4L5 0 10 2 8 7 4.5 10 0.5 7z" fill="#c8cacc"/><path d="M3 5l2 2 4-4.5" fill="none" stroke="#3b3e42" stroke-width="1.3"/></svg>
<div class="t" style="left:977.2px;top:176.5px;font-size:8.4px;line-height:9px;color:#c0c0c0;transform:rotate(90deg);transform-origin:0 0">Bean Validation</div>
<svg class="a" style="left:968.4px;top:281.4px" width="10" height="10.7" viewBox="0 0 10 10.7"><ellipse cx="5" cy="2.5" rx="1.8" ry="1.8" fill="#c8cacc"/><ellipse cx="5" cy="6.8" rx="2.5" ry="3.2" fill="#c8cacc"/><path d="M0.5 3.5l2.5 1.5M9.5 3.5L7 5M0 7h2.5M10 7H7.5M0.5 10.5l2.5-2M9.5 10.5L7 8.5" stroke="#c8cacc" stroke-width="0.9"/></svg>
<div class="t" style="left:977.2px;top:294.5px;font-size:8.4px;line-height:9px;color:#c0c0c0;transform:rotate(90deg);transform-origin:0 0">Ant Build</div>
<svg class="a" style="left:968.4px;top:365.7px" width="10.5" height="10" viewBox="0 0 10.5 10"><rect x="3.5" y="0" width="3.5" height="3.5" fill="#c8cacc"/><rect x="0" y="6.5" width="3.5" height="3.5" fill="#c8cacc"/><rect x="7" y="6.5" width="3.5" height="3.5" fill="#c8cacc"/><path d="M5.25 3.5v1.5M1.75 6.5V5h7v1.5" fill="none" stroke="#c8cacc" stroke-width="0.9"/></svg>
<div class="t" style="left:977.2px;top:378.0px;font-size:8.4px;line-height:9px;color:#c0c0c0;transform:rotate(90deg);transform-origin:0 0">8: Hierarchy</div>
<div class="a" style="left:952px;top:114.5px;width:12px;height:16px;background:#262728"></div>
<svg class="a" style="left:953.4px;top:116.4px" width="9.5" height="9.5" viewBox="0 0 9.5 9.5"><circle cx="4.75" cy="4.75" r="4.6" fill="#c13d3d"/><rect x="4.1" y="2" width="1.3" height="3.8" fill="#5a1a1a"/><rect x="4.1" y="6.6" width="1.3" height="1.2" fill="#5a1a1a"/></svg>
<div class="a" style="left:956.2px;top:130.7px;width:7.8px;height:257.8px;background:#5f6062"></div>
<div class="a" style="left:952px;top:143.8px;width:12px;height:1.9px;background:#c09a30"></div>
<div class="a" style="left:952px;top:239.3px;width:12px;height:1.9px;background:#c09a30"></div>
<div class="a" style="left:952px;top:246.0px;width:12px;height:1.9px;background:#c09a30"></div>
<div class="a" style="left:952px;top:287.2px;width:12px;height:1.9px;background:#c09a30"></div>
<div class="a" style="left:952px;top:293.9px;width:12px;height:1.9px;background:#c09a30"></div>
<div class="a" style="left:952px;top:300.6px;width:12px;height:1.9px;background:#c09a30"></div>
<div class="a" style="left:952px;top:307.2px;width:12px;height:1.9px;background:#c09a30"></div>
<div class="a" style="left:952px;top:314.3px;width:12px;height:1.9px;background:#c09a30"></div>
<div class="a" style="left:952px;top:320.9px;width:12px;height:1.9px;background:#c09a30"></div>
<div class="a" style="left:952px;top:328.1px;width:12px;height:1.9px;background:#c09a30"></div>
<div class="a" style="left:952px;top:334.9px;width:12px;height:1.9px;background:#c09a30"></div>
<div class="a" style="left:952px;top:341.6px;width:12px;height:1.9px;background:#c09a30"></div>
<div class="a" style="left:952px;top:348.7px;width:12px;height:1.9px;background:#c09a30"></div>
<div class="a" style="left:952px;top:389.1px;width:12px;height:1.9px;background:#c09a30"></div>
<div class="a" style="left:952px;top:396.3px;width:12px;height:1.9px;background:#c09a30"></div>
<div class="a" style="left:952px;top:403.1px;width:12px;height:1.9px;background:#c09a30"></div>
<div class="a" style="left:952px;top:443.9px;width:12px;height:1.9px;background:#c09a30"></div>
<div class="a" style="left:952px;top:450.9px;width:12px;height:1.9px;background:#c09a30"></div>
<div class="a" style="left:952px;top:491.8px;width:12px;height:1.9px;background:#c09a30"></div>
<div class="a" style="left:952px;top:498.9px;width:12px;height:1.9px;background:#c09a30"></div>
<div class="a" style="left:952px;top:362.0px;width:12px;height:2.2px;background:#7a7d70"></div>
<div class="a" style="left:952px;top:416.4px;width:12px;height:2.2px;background:#7a7d70"></div>
<div class="a" style="left:952px;top:512.6px;width:12px;height:2.2px;background:#b03c36"></div>
<div class="a" style="left:948.3px;top:361px;width:2px;height:4.3px;background:#4a88c0"></div>
<svg class="a" style="left:63.2px;top:143.625px;z-index:1" width="7" height="7" viewBox="0 0 7 7"><rect x="0.5" y="0.5" width="6" height="6" fill="#303132" stroke="#5f6163" stroke-width="0.8"/><path d="M2 3.5h3" stroke="#77797b" stroke-width="0.8"/></svg>
<svg class="a" style="left:63.2px;top:167.105px;z-index:1" width="7" height="8" viewBox="0 0 7 8"><path d="M0.5 0.5h6v4.5L3.5 7.5 0.5 5z" fill="#303132" stroke="#5f6163" stroke-width="0.8"/><path d="M2 3h3" stroke="#77797b" stroke-width="0.8"/></svg>
<svg class="a" style="left:63.2px;top:249.93500000000003px;z-index:1" width="7" height="8" viewBox="0 0 7 8"><path d="M0.5 7.5h6V3L3.5 0.5 0.5 3z" fill="#303132" stroke="#5f6163" stroke-width="0.8"/><path d="M2 4.5h3" stroke="#77797b" stroke-width="0.8"/></svg>
<svg class="a" style="left:63.2px;top:286.005px;z-index:1" width="7" height="8" viewBox="0 0 7 8"><path d="M0.5 0.5h6v4.5L3.5 7.5 0.5 5z" fill="#303132" stroke="#5f6163" stroke-width="0.8"/><path d="M2 3h3" stroke="#77797b" stroke-width="0.8"/></svg>
<svg class="a" style="left:63.2px;top:333.165px;z-index:1" width="7" height="8" viewBox="0 0 7 8"><path d="M0.5 7.5h6V3L3.5 0.5 0.5 3z" fill="#303132" stroke="#5f6163" stroke-width="0.8"/><path d="M2 4.5h3" stroke="#77797b" stroke-width="0.8"/></svg>
<svg class="a" style="left:63.2px;top:381.125px;z-index:1" width="7" height="8" viewBox="0 0 7 8"><path d="M0.5 0.5h6v4.5L3.5 7.5 0.5 5z" fill="#303132" stroke="#5f6163" stroke-width="0.8"/><path d="M2 3h3" stroke="#77797b" stroke-width="0.8"/></svg>
<svg class="a" style="left:63.2px;top:511.51500000000004px;z-index:1" width="7" height="8" viewBox="0 0 7 8"><path d="M0.5 7.5h6V3L3.5 0.5 0.5 3z" fill="#303132" stroke="#5f6163" stroke-width="0.8"/><path d="M2 4.5h3" stroke="#77797b" stroke-width="0.8"/></svg>
<svg class="a" style="left:63.2px;top:547.5850000000002px;z-index:1" width="7" height="8" viewBox="0 0 7 8"><path d="M0.5 0.5h6v4.5L3.5 7.5 0.5 5z" fill="#303132" stroke="#5f6163" stroke-width="0.8"/><path d="M2 3h3" stroke="#77797b" stroke-width="0.8"/></svg>
<svg class="a" style="left:35px;top:261.52500000000003px" width="9" height="9" viewBox="0 0 9 9"><circle cx="3.8" cy="3.8" r="3.5" fill="#4fa24a"/><circle cx="5.3" cy="5.5" r="3" fill="#3d94c4"/><path d="M1 1.5l2 2" stroke="#dddddd" stroke-width="1"/></svg>
<svg class="a" style="left:45.8px;top:261.52500000000003px" width="9" height="9" viewBox="0 0 9 9"><circle cx="4" cy="4.5" r="3.6" fill="#4fa24a"/><circle cx="4" cy="4.5" r="1.3" fill="#2a5a2a"/><path d="M7.7 0.5V7" stroke="#dddddd" stroke-width="1"/><path d="M6.3 6.3h2.8L7.7 8.6z" fill="#dddddd"/></svg>
<svg class="a" style="left:45.5px;top:344.75500000000005px" width="9" height="9" viewBox="0 0 9 9"><circle cx="4" cy="4.5" r="3.6" fill="#4fa24a"/><circle cx="4" cy="4.5" r="1.3" fill="#2a5a2a"/><path d="M7.7 0.5V7" stroke="#dddddd" stroke-width="1"/><path d="M6.3 6.3h2.8L7.7 8.6z" fill="#dddddd"/></svg>
<svg class="a" style="left:45.5px;top:523.105px" width="9" height="9" viewBox="0 0 9 9"><circle cx="4" cy="4.5" r="3.6" fill="#4fa24a"/><circle cx="4" cy="4.5" r="1.3" fill="#2a5a2a"/><path d="M7.7 0.5V7" stroke="#dddddd" stroke-width="1"/><path d="M6.3 6.3h2.8L7.7 8.6z" fill="#dddddd"/></svg>
<div class="a" style="left:59.7px;top:519.8px;width:6.3px;height:11.8px;background:#3a5573"></div>
<svg class="a" style="left:25.5px;top:595.2px" width="11" height="10.8" viewBox="0 0 11 10.8"><ellipse cx="5" cy="1.4" rx="4.6" ry="1.3" fill="#c4c6c8"/><rect x="0.4" y="3" width="9.2" height="1.6" rx="0.8" fill="#c4c6c8"/><rect x="0.4" y="5.3" width="5" height="1.6" rx="0.8" fill="#c4c6c8"/><rect x="0.4" y="7.6" width="3.5" height="1.6" rx="0.8" fill="#c4c6c8"/><path d="M4.5 7.5l2 2 4-4" fill="none" stroke="#c4c6c8" stroke-width="1.4"/></svg>
<svg class="a" style="left:152.5px;top:595.5px" width="11" height="11" viewBox="0 0 11 11"><path d="M0 0h10v3H3v8H0z" fill="#c4c6c8"/><rect x="3.8" y="3.8" width="7" height="7" fill="none" stroke="#c4c6c8" stroke-width="1"/><path d="M5.5 6v3M7.5 6v3" stroke="#c4c6c8" stroke-width="0.9"/></svg>
<svg class="a" style="left:270.6px;top:596.5px" width="10" height="8" viewBox="0 0 10 8"><rect x="0" y="0" width="1.6" height="1.5" fill="#c4c6c8"/><rect x="2.6" y="0" width="7.2" height="1.5" fill="#c4c6c8"/><rect x="0" y="2.2" width="1.6" height="1.5" fill="#c4c6c8"/><rect x="2.6" y="2.2" width="7.2" height="1.5" fill="#c4c6c8"/><rect x="0" y="4.4" width="1.6" height="1.5" fill="#c4c6c8"/><rect x="2.6" y="4.4" width="7.2" height="1.5" fill="#c4c6c8"/><rect x="0" y="6.6" width="1.6" height="1.4" fill="#c4c6c8"/><rect x="2.6" y="6.6" width="7.2" height="1.4" fill="#c4c6c8"/></svg>
<div class="a" style="left:284px;top:604.3px;width:5px;height:0.9px;background:#a0a0a0"></div>
<svg class="a" style="left:343.4px;top:596px" width="9.5" height="9" viewBox="0 0 9.5 9"><ellipse cx="4.75" cy="4.5" rx="4.5" ry="4.2" fill="#e02020"/><path d="M2 6l2-1 2 1" stroke="#fff" stroke-width="0.7" fill="none"/></svg>
<svg class="a" style="left:448.2px;top:596.5px" width="11" height="7.5" viewBox="0 0 11 7.5"><path d="M0.5 7C0.5 3 3 0.5 10.5 0.3 9.5 5 7 7.2 0.5 7z" fill="#c4c6c8"/><path d="M1.5 6.5C4 5 6 3.5 8 1.5" stroke="#3b3e42" stroke-width="0.8" fill="none"/></svg>
<svg class="a" style="left:514.2px;top:595.7px" width="10.2" height="9.2" viewBox="0 0 10.2 9.2"><rect width="10.2" height="9.2" fill="#c4c6c8"/><path d="M1.8 2l2 1.8-2 1.8M4.5 7h3.5" fill="none" stroke="#3b3e42" stroke-width="1"/></svg>
<svg class="a" style="left:594.9px;top:596px" width="10.5" height="9.5" viewBox="0 0 10.5 9.5"><path d="M1 0v9.5M1 9h4" stroke="#c4c6c8" stroke-width="1.4" fill="none"/><path d="M4 8V4h3" stroke="#c4c6c8" stroke-width="1.4" fill="none"/><path d="M6.5 1.5L10 4 6.5 6.5z" fill="#c4c6c8"/></svg>
<div class="a" style="left:608px;top:604.3px;width:5px;height:0.9px;background:#a0a0a0"></div>
<svg class="a" style="left:732.5px;top:595.8px" width="11.5" height="10.5" viewBox="0 0 11.5 10.5"><rect x="0" y="0" width="6.5" height="2" fill="#c4c6c8"/><rect x="0" y="3" width="6.5" height="2" fill="#c4c6c8"/><rect x="0" y="6" width="3.5" height="2" fill="#c4c6c8"/><rect x="0" y="9" width="3.5" height="1.5" fill="#c4c6c8"/><path d="M5 4.5l6.3 3-6.3 3z" fill="#c4c6c8"/></svg>
<svg class="a" style="left:889.8px;top:595.8px" width="12.5" height="11" viewBox="0 0 12.5 11"><path d="M6 0.8A5 4.8 0 1 1 6 10.4H1.2V5.6A5 4.8 0 0 1 6 0.8z" fill="none" stroke="#c4c6c8" stroke-width="1.2"/></svg>
<svg class="a" style="left:4px;top:613.8px" width="11.5" height="10.6" viewBox="0 0 11.5 10.6"><rect x="0.6" y="0.6" width="8.5" height="8" fill="none" stroke="#a8aaac" stroke-width="1.1"/><path d="M2.5 10H11V2.5" fill="none" stroke="#a8aaac" stroke-width="1"/></svg>
<svg class="a" style="left:642px;top:615.8px" width="5" height="7" viewBox="0 0 5 7"><path d="M0.3 3L2.5 0.3 4.7 3z" fill="#b0b2b4"/><path d="M0.3 4L2.5 6.7 4.7 4z" fill="#b0b2b4"/></svg>
<svg class="a" style="left:689px;top:615.8px" width="5" height="7" viewBox="0 0 5 7"><path d="M0.3 3L2.5 0.3 4.7 3z" fill="#b0b2b4"/><path d="M0.3 4L2.5 6.7 4.7 4z" fill="#b0b2b4"/></svg>
<svg class="a" style="left:754.3px;top:615.8px" width="5" height="7" viewBox="0 0 5 7"><path d="M0.3 3L2.5 0.3 4.7 3z" fill="#b0b2b4"/><path d="M0.3 4L2.5 6.7 4.7 4z" fill="#b0b2b4"/></svg>
<svg class="a" style="left:908.8px;top:615.8px" width="5" height="7" viewBox="0 0 5 7"><path d="M0.3 3L2.5 0.3 4.7 3z" fill="#b0b2b4"/><path d="M0.3 4L2.5 6.7 4.7 4z" fill="#b0b2b4"/></svg>
<svg class="a" style="left:922.1px;top:613.5px" width="10.5" height="10" viewBox="0 0 10.5 10"><path d="M1.8 4.5V2.6A2 2 0 0 1 5.8 2.6" fill="none" stroke="#c4c6c8" stroke-width="1.3"/><rect x="3" y="4.5" width="7.5" height="5.5" fill="#c4c6c8"/></svg>
<svg class="a" style="left:944.2px;top:613.5px" width="11" height="12.5" viewBox="0 0 11 12.5"><circle cx="5.5" cy="3.2" r="2.8" fill="none" stroke="#a8aaac" stroke-width="1"/><path d="M1.5 12V7.5C1.5 6 3 5.5 5.5 5.5S9.5 6 9.5 7.5V12M3.5 9v3M7.5 9v3M0 8.5h2M9 8.5h2" fill="none" stroke="#a8aaac" stroke-width="1"/></svg>
<svg class="a" style="left:965.5px;top:613.9px" width="11" height="11.3" viewBox="0 0 11 11.3"><path d="M9.8 3.2A4.9 4.9 0 1 0 10.3 7" fill="none" stroke="#e94235" stroke-width="2"/><path d="M1.2 3.2A4.9 4.9 0 0 0 1 7.5" fill="none" stroke="#fbbc05" stroke-width="2"/><path d="M1.5 8.2A4.9 4.9 0 0 0 9 9.3" fill="none" stroke="#34a853" stroke-width="2"/><path d="M5.5 5.6h5v1.4" fill="none" stroke="#4285f4" stroke-width="2"/></svg>
</body></html>
